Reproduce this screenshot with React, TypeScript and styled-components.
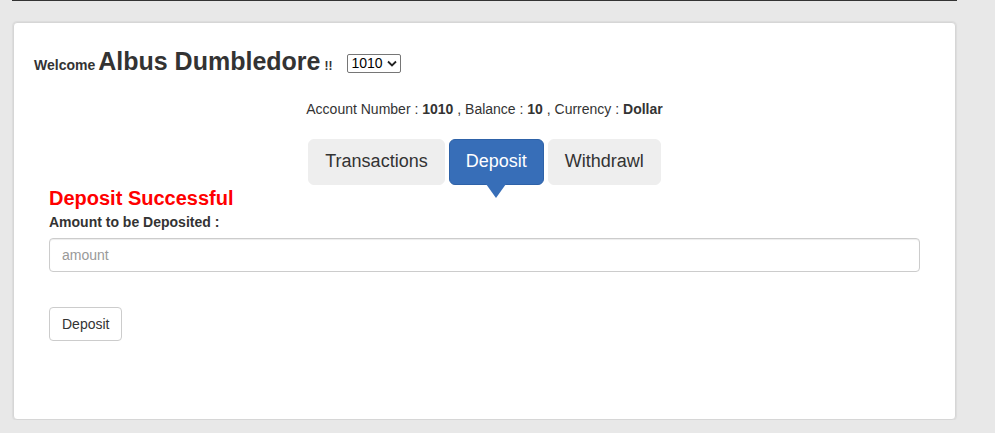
import React from "react";
import styled, { createGlobalStyle } from "styled-components";

const Global = createGlobalStyle`
  html, body { margin: 0; padding: 0; }
  body {
    background: #e8e8e8;
    font-family: "Liberation Sans", Arial, Helvetica, sans-serif;
    font-size: 14px;
    line-height: 1.42857;
    color: #333;
  }
  * { box-sizing: border-box; }
`;

const Page = styled.div`
  width: 995px;
  padding-left: 12px;
`;

const TopRule = styled.div`
  width: 945px;
  height: 1px;
  background: #333;
`;

const Card = styled.div`
  margin: 21px 0 0 1px;
  width: 943px;
  height: 398px;
  background: #fff;
  border: 1px solid #d6d6d6;
  border-radius: 4px;
  box-shadow: 0 0 1px 1px #dcdcdc;
  padding: 20px;
`;

const WelcomeRow = styled.div`
  display: flex;
  align-items: baseline;
  margin-top: 5px;
  font-weight: bold;
  line-height: 1.1;
`;

const Small = styled.span`
  font-size: 14px;
  margin-right: 3px;
`;

const Name = styled.span`
  font-size: 25px;
  margin-right: 4px;
`;

const Bang = styled.span`
  font-size: 12px;
  margin-right: 15px;
`;

const SelectWrap = styled.span`
  position: relative;
  align-self: center;
  top: 2px;
  display: inline-block;
  width: 54px;
  height: 19px;
`;

const Select = styled.select`
  appearance: none;
  -webkit-appearance: none;
  display: block;
  font-family: "Liberation Sans", Arial, sans-serif;
  font-size: 14px;
  font-weight: normal;
  color: #000;
  height: 19px;
  width: 54px;
  padding: 0 0 0 3px;
  line-height: 17px;
  border: 1px solid #767676;
  border-radius: 2px;
  background: #fff;
`;

const Chevron = styled.svg`
  position: absolute;
  right: 4px;
  top: 6px;
  width: 10px;
  height: 7px;
  pointer-events: none;
`;

const AccountLine = styled.div`
  text-align: center;
  margin-top: 24px;
`;

const Tabs = styled.div`
  display: flex;
  justify-content: center;
  gap: 4px;
  margin-top: 20px;
`;

const Tab = styled.button<{ $active?: boolean }>`
  position: relative;
  font-family: "Liberation Sans", Arial, sans-serif;
  font-size: 18px;
  line-height: 1.3333;
  padding: 10px 16px;
  border-radius: 6px;
  border: 1px solid ${(p) => (p.$active ? "#2e62a8" : "#eee")};
  background: ${(p) => (p.$active ? "#376eb8" : "#eee")};
  color: ${(p) => (p.$active ? "#fff" : "#333")};
  cursor: pointer;
`;

const Arrow = styled.span`
  position: absolute;
  left: 50%;
  bottom: -14px;
  margin-left: -10px;
  width: 0;
  height: 0;
  border-left: 10px solid transparent;
  border-right: 10px solid transparent;
  border-top: 14px solid #376eb8;
`;

const Form = styled.div`
  padding: 0 15px;
`;

const Message = styled.div`
  color: #f00;
  font-size: 20px;
  font-weight: bold;
  line-height: 22px;
  margin-top: 2px;
`;

const Label = styled.label`
  display: block;
  font-weight: bold;
  margin-top: 4px;
  margin-bottom: 5px;
`;

const Input = styled.input`
  display: block;
  width: 100%;
  height: 34px;
  padding: 6px 12px;
  font-family: "Liberation Sans", Arial, sans-serif;
  font-size: 14px;
  color: #555;
  border: 1px solid #ccc;
  border-radius: 4px;
  box-shadow: inset 0 1px 1px rgba(0, 0, 0, 0.075);
  &::placeholder { color: #999; }
`;

const Button = styled.button`
  margin-top: 35px;
  height: 34px;
  padding: 6px 12px;
  font-family: "Liberation Sans", Arial, sans-serif;
  font-size: 14px;
  color: #333;
  background: #fff;
  border: 1px solid #ccc;
  border-radius: 4px;
  cursor: pointer;
`;

export default function App() {
  return (
    <>
      <Global />
      <Page>
        <TopRule />
        <Card>
          <WelcomeRow>
            <Small>Welcome</Small>
            <Name>Albus Dumbledore</Name>
            <Bang>!!</Bang>
            <SelectWrap>
              <Select defaultValue="1010">
                <option value="1010">1010</option>
              </Select>
              <Chevron viewBox="0 0 10 7">
                <path d="M1 1.5 L5 5.5 L9 1.5" fill="none" stroke="#222" strokeWidth="1.8" />
              </Chevron>
            </SelectWrap>
          </WelcomeRow>
          <AccountLine>
            Account Number : <b>1010</b> , Balance : <b>10</b> , Currency : <b>Dollar</b>
          </AccountLine>
          <Tabs>
            <Tab>Transactions</Tab>
            <Tab $active>
              Deposit
              <Arrow />
            </Tab>
            <Tab>Withdrawl</Tab>
          </Tabs>
          <Form>
            <Message>Deposit Successful</Message>
            <Label>Amount to be Deposited :</Label>
            <Input placeholder="amount" />
            <Button>Deposit</Button>
          </Form>
        </Card>
      </Page>
    </>
  );
}
